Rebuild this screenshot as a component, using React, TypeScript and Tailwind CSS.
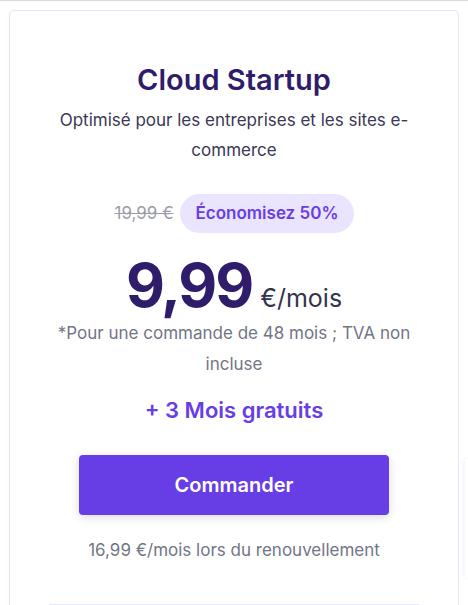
import React from "react";

export default function App() {
  return (
    <div className="relative w-[468px] h-[605px] overflow-hidden bg-white border-t border-[#d9d9d9]" style={{ fontFamily: "Inter, 'Noto Sans', sans-serif" }}>
      <div className="absolute right-0 top-[458px] h-[118px] w-[3px] shadow-[0_0_6px_rgba(0,0,0,0.12)] bg-white" />
      <div className="ml-[9px] mt-[9px] w-[450px] h-[640px] border border-[#dfe5fb] rounded-[5px] bg-white flex flex-col items-center">
        <h2 className="mt-[51px] text-[29px] leading-[36px] font-semibold text-[#2f1c6a]">Cloud Startup</h2>
        <p className="mt-[7px] w-[380px] text-center text-[17px] leading-[30px] text-[#3b3755]">Optimisé pour les entreprises et les sites e-commerce</p>
        <div className="mt-[29px] flex items-center gap-[7px]">
          <span className="text-[17px] text-[#9c9ca8] line-through">19,99 €</span>
          <span className="h-[39px] px-[15px] rounded-full bg-[#ebe4ff] text-[#673de6] text-[17px] font-semibold flex items-center">Économisez 50%</span>
        </div>
        <div className="mt-[20px] flex items-baseline gap-[8px] text-[#2f1c6a]">
          <span className="text-[60px] leading-[64px] font-bold tracking-[-2px]">9,99</span>
          <span className="text-[25px] text-[#36344d]">€/mois</span>
        </div>
        <p className="mt-0 w-[380px] text-center text-[17px] leading-[31px] text-[#727586]">*Pour une commande de 48 mois ; TVA non incluse</p>
        <p className="mt-[16px] text-[22px] leading-[28px] font-semibold text-[#673de6]">+ 3 Mois gratuits</p>
        <button className="mt-[31px] w-[310px] h-[60px] rounded-[4px] bg-[#673de6] text-white text-[20px] font-semibold shadow-[0_2px_10px_rgba(0,0,0,0.15)]">Commander</button>
        <p className="mt-[23px] text-[17px] leading-[24px] text-[#727586]">16,99 €/mois lors du renouvellement</p>
        <div className="mt-[42px] w-[370px] h-[2px] bg-[#e3e8fd]" />
      </div>
    </div>
  );
}
